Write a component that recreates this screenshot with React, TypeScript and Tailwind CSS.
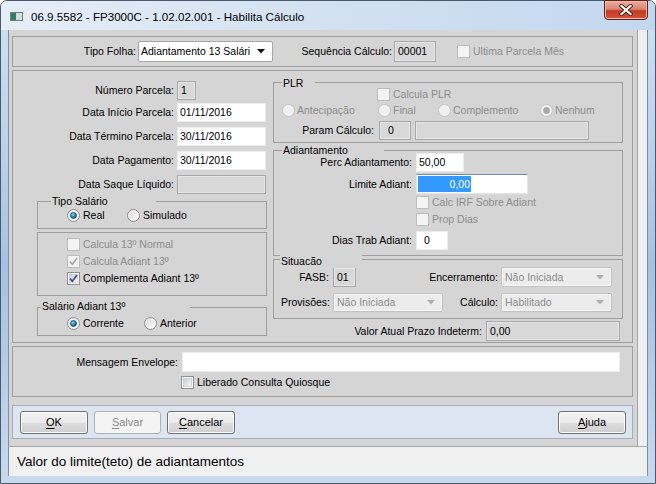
import React from "react"

const F = "font-['Liberation_Sans',Arial,sans-serif]"

function Radio({ on = false, off = false }: { on?: boolean; off?: boolean }) {
  return (
    <svg width="13" height="13" viewBox="0 0 13 13" className="shrink-0">
      <defs>
        <linearGradient id="rgEn" x1="0" y1="0" x2="1" y2="1">
          <stop offset="0" stopColor="#d8d8d8" />
          <stop offset="1" stopColor="#fdfdfd" />
        </linearGradient>
        <radialGradient id="rgDot" cx="0.4" cy="0.35" r="0.7">
          <stop offset="0" stopColor="#8fd3ee" />
          <stop offset="0.55" stopColor="#2a86b4" />
          <stop offset="1" stopColor="#0c4665" />
        </radialGradient>
      </defs>
      <circle cx="6.5" cy="6.5" r="6" fill={off ? "#f2f2f2" : "#f7f7f7"} stroke={off ? "#c4c4c4" : "#8b8b8b"} />
      <circle cx="6.5" cy="6.5" r="4.3" fill={off ? "#f0f0f0" : "url(#rgEn)"} />
      {on && <circle cx="6.5" cy="6.5" r="3" fill={off ? "#a9a9a9" : "url(#rgDot)"} stroke={off ? "#9a9a9a" : "#0f4a6b"} strokeWidth="0.7" />}
    </svg>
  )
}

function Check({ on = false, off = false }: { on?: boolean; off?: boolean }) {
  return (
    <svg width="13" height="13" viewBox="0 0 13 13" className="shrink-0">
      <defs>
        <linearGradient id="cgEn" x1="0" y1="0" x2="1" y2="1">
          <stop offset="0" stopColor="#cbcfd5" />
          <stop offset="1" stopColor="#f6f6f6" />
        </linearGradient>
      </defs>
      <rect x="0.5" y="0.5" width="12" height="12" fill={off ? "#f4f4f4" : "#fdfdfd"} stroke={off ? "#bdbdbd" : "#8e8f8f"} />
      <rect x="2.5" y="2.5" width="8" height="8" fill={off ? "#f4f4f4" : "url(#cgEn)"} stroke={off ? "#f4f4f4" : "#b9bec4"} strokeWidth="0.6" />
      {on && <path d="M3 6.6 5.3 9.2 10 3.1" fill="none" stroke={off ? "#a6a6a6" : "#344c8c"} strokeWidth="1.7" />}
    </svg>
  )
}

function Arrow({ off = false }: { off?: boolean }) {
  return (
    <svg width="8" height="5" viewBox="0 0 8 5" className="shrink-0">
      <path d="M0 0h8L4 4.5z" fill={off ? "#b0b0b0" : "#111"} />
    </svg>
  )
}

function Btn({ u, rest, w, off = false }: { u: string; rest: string; w: string; off?: boolean }) {
  return (
    <div
      className={`${w} h-[23px] flex items-center justify-center rounded-[3px] border text-[11px] ${
        off
          ? "border-[#adb2b5] bg-[#f4f4f4] text-[#8a8a8a]"
          : "border-[#707070] bg-[linear-gradient(to_bottom,#f2f2f2_0%,#ebebeb_50%,#dddddd_51%,#cfcfcf_100%)] text-black shadow-[inset_0_0_0_1px_#fcfcfc]"
      }`}
    >
      <span>
        <u className="underline-offset-[2px]">{u}</u>
        {rest}
      </span>
    </div>
  )
}

const white = "h-[19px] bg-white border border-[#ececec] pl-[2px] leading-[17px]"
const grey = "h-[19px] bg-[#d8d8d8] border border-[#a8a8a8] shadow-[inset_0_0_0_1px_#e6e6e6] pl-[3px] leading-[17px]"
const dimText = "text-[#8c8c8c]"

export default function App() {
  return (
    <div className={`w-[656px] h-[484px] overflow-hidden bg-white text-[10.5px] leading-[13px] text-black ${F}`}>
      <div className="w-[656px] h-[484px] flex flex-col rounded-t-[7px] border border-[#4a5a6e] bg-[linear-gradient(to_bottom,#d3e1f2_0%,#bcd1eb_30%,#a6c1e3_55%,#b9cee9_80%,#c9daee_100%)]">
        {/* title bar */}
        <div className="h-[29px] shrink-0 flex items-start rounded-t-[6px] bg-[linear-gradient(to_right,#e6eef8_0%,#d4e2f2_45%,#c3d7ee_100%)]">
          <div className="mt-[11px] ml-[9px] w-[13px] h-[9px] flex border border-[#6f7f7c]">
            <div className="w-[5px] bg-[#2f7f62]" />
            <div className="flex-1 bg-[#d8dcdc]" />
          </div>
          <span className="ml-[8px] mt-[8px] text-[11.6px] leading-[15px] text-black">06.9.5582 - FP3000C - 1.02.02.001 - Habilita Cálculo</span>
          <div className="ml-auto mr-[7px] w-[44px] h-[20px] -mt-[1px] flex items-center justify-center rounded-b-[4px] border border-[#5e2419] bg-[linear-gradient(to_bottom,#eab0a2_0%,#d98473_45%,#c23a23_55%,#d4553a_100%)] shadow-[inset_0_0_0_1px_#f0b9ab]">
            <svg width="14" height="12" viewBox="0 0 14 12">
              <path d="M2.5 2 11.5 10M11.5 2 2.5 10" stroke="#4a1c14" strokeWidth="4" strokeLinecap="square" />
              <path d="M2.5 2 11.5 10M11.5 2 2.5 10" stroke="#fff" strokeWidth="2.2" strokeLinecap="square" />
            </svg>
          </div>
        </div>

        {/* client */}
        <div className="mx-[7px] h-[446px] flex flex-col border-x border-[#7f90a6]">
          <div className="h-[416px] flex">
            <div className="flex-1 bg-[#d5d5d5] pl-[3px] flex flex-col">
              {/* top panel */}
              <div className="mt-[6px] w-[621px] h-[31px] border border-[#9e9e9e] flex items-center">
                <span className="w-[123px] text-right">Tipo Folha:</span>
                <div className="ml-[2px] w-[135px] h-[21px] bg-white border border-[#a6a6a6] rounded-[2px] flex items-center pl-[2px] pr-[7px]">
                  <span>Adiantamento 13 Salári</span>
                  <span className="ml-auto"><Arrow /></span>
                </div>
                <span className="w-[119px] text-right">Sequência Cálculo:</span>
                <div className={`ml-[2px] w-[42px] ${grey} h-[21px] leading-[19px]`}>00001</div>
                <span className="ml-[21px]"><Check off /></span>
                <span className={`ml-[3px] ${dimText}`}>Ultima Parcela Mês</span>
              </div>

              {/* middle panel */}
              <div className="mt-[3px] w-[621px] h-[273px] border border-[#9e9e9e] flex">
                {/* left column */}
                <div className="w-[259px] flex flex-col">
                  <div className="mt-[10px] h-[22px] flex items-start">
                    <span className="w-[161px] text-right leading-[18px]">Número Parcela:</span>
                    <div className={`ml-[3px] w-[19px] ${grey} h-[18px] leading-[16px]`}>1</div>
                  </div>
                  <div className="h-[24px] flex items-start">
                    <span className="w-[161px] text-right leading-[19px]">Data Início Parcela:</span>
                    <div className={`ml-[3px] w-[89px] ${white}`}>01/11/2016</div>
                  </div>
                  <div className="h-[24px] flex items-start">
                    <span className="w-[161px] text-right leading-[19px]">Data Término Parcela:</span>
                    <div className={`ml-[3px] w-[89px] ${white}`}>30/11/2016</div>
                  </div>
                  <div className="h-[24px] flex items-start">
                    <span className="w-[161px] text-right leading-[19px]">Data Pagamento:</span>
                    <div className={`ml-[3px] w-[89px] ${white}`}>30/11/2016</div>
                  </div>
                  <div className="h-[24px] flex items-start">
                    <span className="w-[161px] text-right leading-[19px]">Data Saque Líquido:</span>
                    <div className={`ml-[3px] w-[89px] ${grey}`}></div>
                  </div>

                  <div className="relative mt-[2px] ml-[24px] w-[230px] h-[28px] border border-[#9e9e9e]">
                    <span className="absolute left-[13px] -top-[7px] w-[105px] pl-[1px] bg-[#d5d5d5]">Tipo Salário</span>
                    <div className="pt-[6px] pl-[29px] flex items-center h-[20px]">
                      <div className="w-[60px] flex items-center gap-[3px]"><Radio on /><span>Real</span></div>
                      <div className="flex items-center gap-[3px]"><Radio /><span>Simulado</span></div>
                    </div>
                  </div>

                  <div className="mt-[3px] ml-[24px] w-[230px] h-[64px] border border-[#9e9e9e] pt-[3px] pl-[29px] flex flex-col">
                    <div className="h-[17px] flex items-center gap-[3px]"><Check off /><span className={dimText}>Calcula 13º Normal</span></div>
                    <div className="h-[17px] flex items-center gap-[3px]"><Check on off /><span className={dimText}>Calcula Adiant 13º</span></div>
                    <div className="h-[17px] flex items-center gap-[3px]"><Check on /><span>Complementa Adiant 13º</span></div>
                  </div>

                  <div className="relative mt-[11px] ml-[24px] w-[230px] h-[29px] border border-[#9e9e9e]">
                    <span className="absolute left-[3px] -top-[8px] w-[149px] pl-[1px] bg-[#d5d5d5]">Salário Adiant 13º</span>
                    <div className="pt-[8px] pl-[29px] flex items-center h-[22px]">
                      <div className="w-[77px] flex items-center gap-[3px]"><Radio on /><span>Corrente</span></div>
                      <div className="flex items-center gap-[3px]"><Radio /><span>Anterior</span></div>
                    </div>
                  </div>
                </div>

                {/* right column */}
                <div className="w-[351px] flex flex-col">
                  <div className="relative mt-[11px] ml-[1px] w-[350px] h-[61px] border border-[#9e9e9e] flex flex-col">
                    <span className="absolute left-[8px] -top-[6px] w-[33px] pl-[1px] bg-[#d5d5d5]">PLR</span>
                    <div className="mt-[5px] ml-[103px] h-[13px] flex items-center gap-[3px]"><Check off /><span className={dimText}>Calcula PLR</span></div>
                    <div className={`mt-[2px] ml-[8px] h-[14px] flex items-center ${dimText}`}>
                      <div className="w-[96px] flex items-center gap-[2px]"><Radio off /><span>Antecipação</span></div>
                      <div className="w-[60px] flex items-center gap-[2px]"><Radio off /><span>Final</span></div>
                      <div className="w-[102px] flex items-center gap-[2px]"><Radio off /><span>Complemento</span></div>
                      <div className="flex items-center gap-[2px]"><Radio on off /><span>Nenhum</span></div>
                    </div>
                    <div className="mt-[4px] h-[19px] flex">
                      <span className="w-[100px] text-right leading-[19px]">Param Cálculo:</span>
                      <div className={`ml-[5px] w-[32px] ${grey} pl-[8px]`}>0</div>
                      <div className={`ml-[4px] w-[174px] ${grey}`}></div>
                    </div>
                  </div>

                  <div className="relative mt-[7px] ml-[1px] w-[350px] h-[106px] border border-[#9e9e9e] flex flex-col">
                    <span className="absolute left-[8px] -top-[7px] w-[102px] pl-[1px] bg-[#d5d5d5]">Adiantamento</span>
                    <div className="mt-[2px] h-[19px] flex">
                      <span className="w-[138px] text-right leading-[19px]">Perc Adiantamento:</span>
                      <div className={`ml-[4px] w-[48px] ${white}`}>50,00</div>
                    </div>
                    <div className="mt-[2px] h-[20px] flex">
                      <span className="w-[138px] text-right leading-[20px]">Limite Adiant:</span>
                      <div className="ml-[4px] w-[112px] h-[20px] bg-white border border-[#e6e6e6] border-t-[#6f8cb0] pl-[1px] pt-[1px]">
                        <div className="w-[53px] h-[16px] bg-[#3399ff] text-white text-right pr-[1px] leading-[16px]">0,00</div>
                      </div>
                    </div>
                    <div className="h-[17px] ml-[142px] flex items-center gap-[3px]"><Check off /><span className={dimText}>Calc IRF Sobre Adiant</span></div>
                    <div className="h-[17px] ml-[142px] flex items-center gap-[3px]"><Check off /><span className={dimText}>Prop Dias</span></div>
                    <div className="mt-[3px] h-[19px] flex">
                      <span className="w-[138px] text-right leading-[19px]">Dias Trab Adiant:</span>
                      <div className={`ml-[4px] w-[32px] ${white} pl-[7px]`}>0</div>
                    </div>
                  </div>

                  <div className="relative mt-[3px] ml-[1px] w-[350px] h-[60px] border border-[#9e9e9e] flex flex-col">
                    <span className="absolute left-[6px] -top-[5px] w-[82px] pl-[1px] bg-[#d5d5d5]">Situacão</span>
                    <div className="mt-[7px] h-[20px] flex">
                      <span className="w-[55px] text-right leading-[20px]">FASB:</span>
                      <div className={`ml-[4px] w-[23px] ${grey} h-[20px] leading-[18px] pl-[2px]`}>01</div>
                      <span className="w-[142px] text-right leading-[20px]">Encerramento:</span>
                      <div className="ml-[3px] w-[111px] h-[20px] bg-[#ececec] border border-[#c2c2c2] rounded-[2px] shadow-[inset_0_0_0_1px_#f7f7f7] flex items-center pl-[3px] pr-[7px] text-[#8c8c8c]">
                        <span>Não Iniciada</span>
                        <span className="ml-auto"><Arrow off /></span>
                      </div>
                    </div>
                    <div className="mt-[6px] h-[19px] flex">
                      <span className="w-[56px] text-right leading-[19px]">Provisões:</span>
                      <div className="ml-[3px] w-[110px] h-[19px] bg-[#ececec] border border-[#c2c2c2] rounded-[2px] shadow-[inset_0_0_0_1px_#f7f7f7] flex items-center pl-[3px] pr-[7px] text-[#8c8c8c]">
                        <span>Não Iniciada</span>
                        <span className="ml-auto"><Arrow off /></span>
                      </div>
                      <span className="w-[55px] text-right leading-[19px]">Cálculo:</span>
                      <div className="ml-[3px] w-[111px] h-[19px] bg-[#ececec] border border-[#c2c2c2] rounded-[2px] shadow-[inset_0_0_0_1px_#f7f7f7] flex items-center pl-[3px] pr-[7px] text-[#8c8c8c]">
                        <span>Habilitado</span>
                        <span className="ml-auto"><Arrow off /></span>
                      </div>
                    </div>
                  </div>

                  <div className="mt-[2px] h-[20px] flex">
                    <span className="w-[210px] text-right leading-[20px]">Valor Atual Prazo Indeterm:</span>
                    <div className={`ml-[4px] w-[134px] ${grey} h-[20px] leading-[18px]`}>0,00</div>
                  </div>
                </div>
              </div>

              {/* bottom panel */}
              <div className="mt-[3px] w-[621px] h-[51px] border border-[#9e9e9e] flex flex-col">
                <div className="mt-[5px] h-[20px] flex">
                  <span className="w-[165px] text-right leading-[20px]">Mensagem Envelope:</span>
                  <div className="ml-[4px] w-[438px] h-[20px] bg-white border border-[#ececec]" />
                </div>
                <div className="mt-[4px] ml-[168px] h-[13px] flex items-center gap-[3px]">
                  <Check />
                  <span>Liberado Consulta Quiosque</span>
                </div>
              </div>

              {/* buttons */}
              <div className="mt-[8px] w-[621px] h-[34px] border border-[#a4acb7] bg-[#dce5f1] flex items-center pl-[7px] pr-[6px] gap-[6px]">
                <Btn u="O" rest="K" w="w-[68px]" />
                <Btn u="S" rest="alvar" w="w-[67px]" off />
                <Btn u="C" rest="ancelar" w="w-[68px]" />
                <div className="ml-auto">
                  <Btn u="A" rest="juda" w="w-[68px]" />
                </div>
              </div>
            </div>
            <div className="w-[10px] border-l border-[#a3a3a3] bg-[#eef0f2]" />
          </div>
          <div className="h-[30px] border-t border-[#a8a8a8] bg-[#f0f0f0] pl-[8px] flex items-center text-[13.5px] leading-[16px]">
            Valor do limite(teto) de adiantamentos
          </div>
        </div>
        <div className="h-[7px]" />
      </div>
    </div>
  )
}
